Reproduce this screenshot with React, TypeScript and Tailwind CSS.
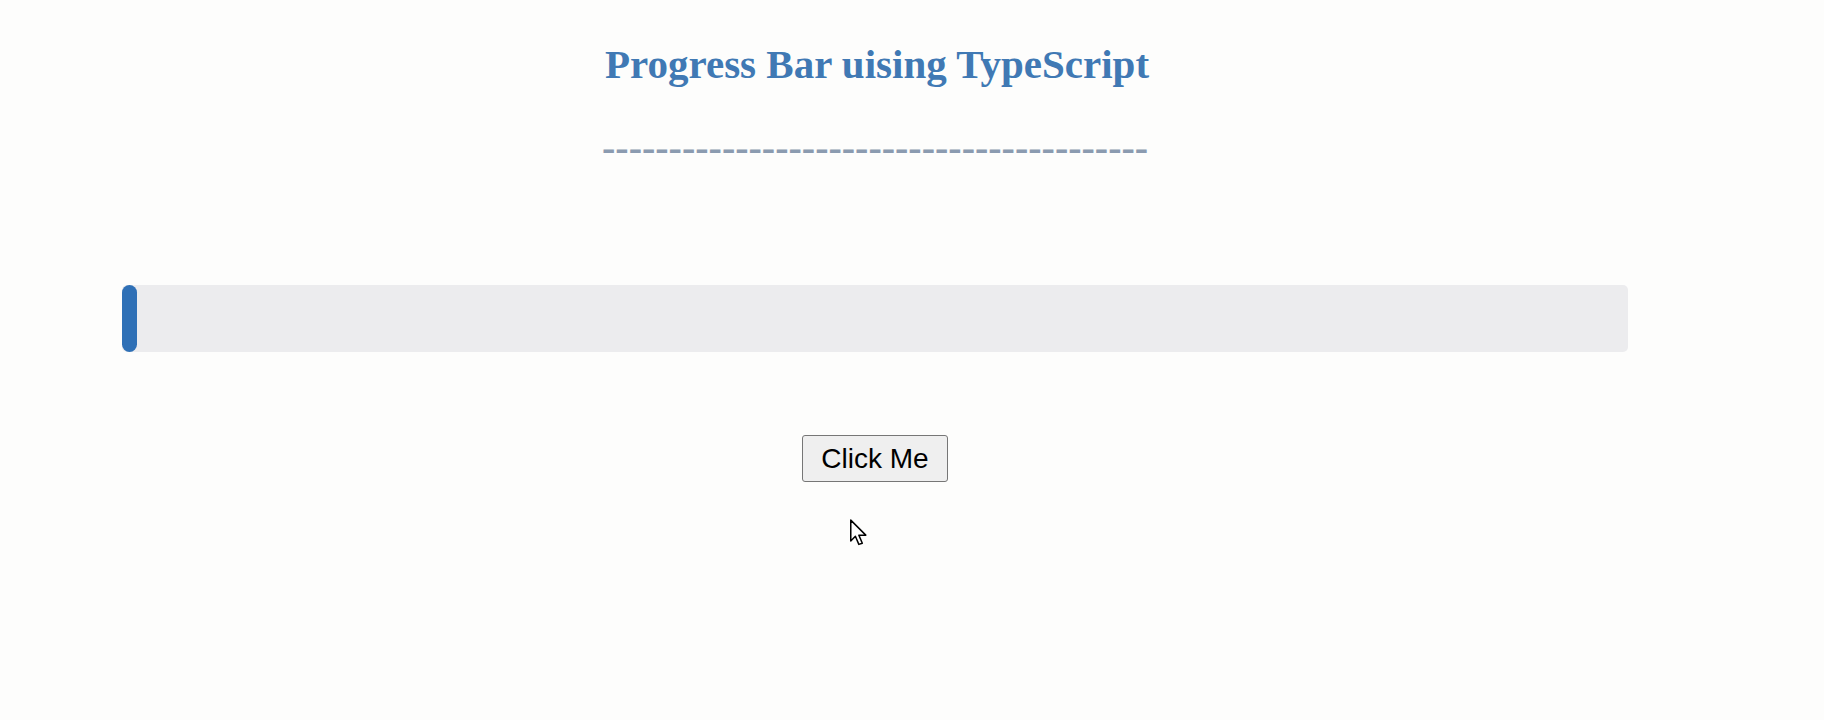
export default function App() {
  return (
    <div className="relative min-h-[720px] w-full bg-[#fdfdfc]">
      <div className="w-[1628px] pl-[122px] pt-[40px]">
        <h1
          className="ml-[483px] text-[41px] font-bold leading-[48px] text-[#4079b4]"
          style={{ fontFamily: '"Liberation Serif", "Times New Roman", serif' }}
        >
          Progress Bar uising TypeScript
        </h1>
        <div
          className="ml-[480px] mt-[40px] text-[40px] font-bold leading-[40px] text-[#8b9bb0]"
          style={{ fontFamily: '"Liberation Serif", "Times New Roman", serif' }}
        >
          -----------------------------------------
        </div>
        <div className="mt-[117px] h-[67px] w-full overflow-hidden rounded-[5px] bg-[#ececee]">
          <div className="h-full w-[15px] rounded-full bg-[#2f70b6]" />
        </div>
        <div className="mt-[83px] flex justify-center">
          <button
            className="rounded-[3px] border border-[#767676] bg-[#efefef] px-[18px] py-[6px] text-[28px] leading-[33px] text-black"
            style={{ fontFamily: '"Liberation Sans", Arial, sans-serif' }}
          >
            Click Me
          </button>
        </div>
      </div>
      <svg
        className="absolute left-[849px] top-[519px]"
        width="22"
        height="30"
        viewBox="0 0 18 26"
      >
        <path
          d="M1 1 L1 19 L5 15 L8 22 L11 21 L8 14 L14 14 Z"
          fill="#ffffff"
          stroke="#000000"
          strokeWidth="1.3"
          strokeLinejoin="round"
        />
      </svg>
    </div>
  );
}
